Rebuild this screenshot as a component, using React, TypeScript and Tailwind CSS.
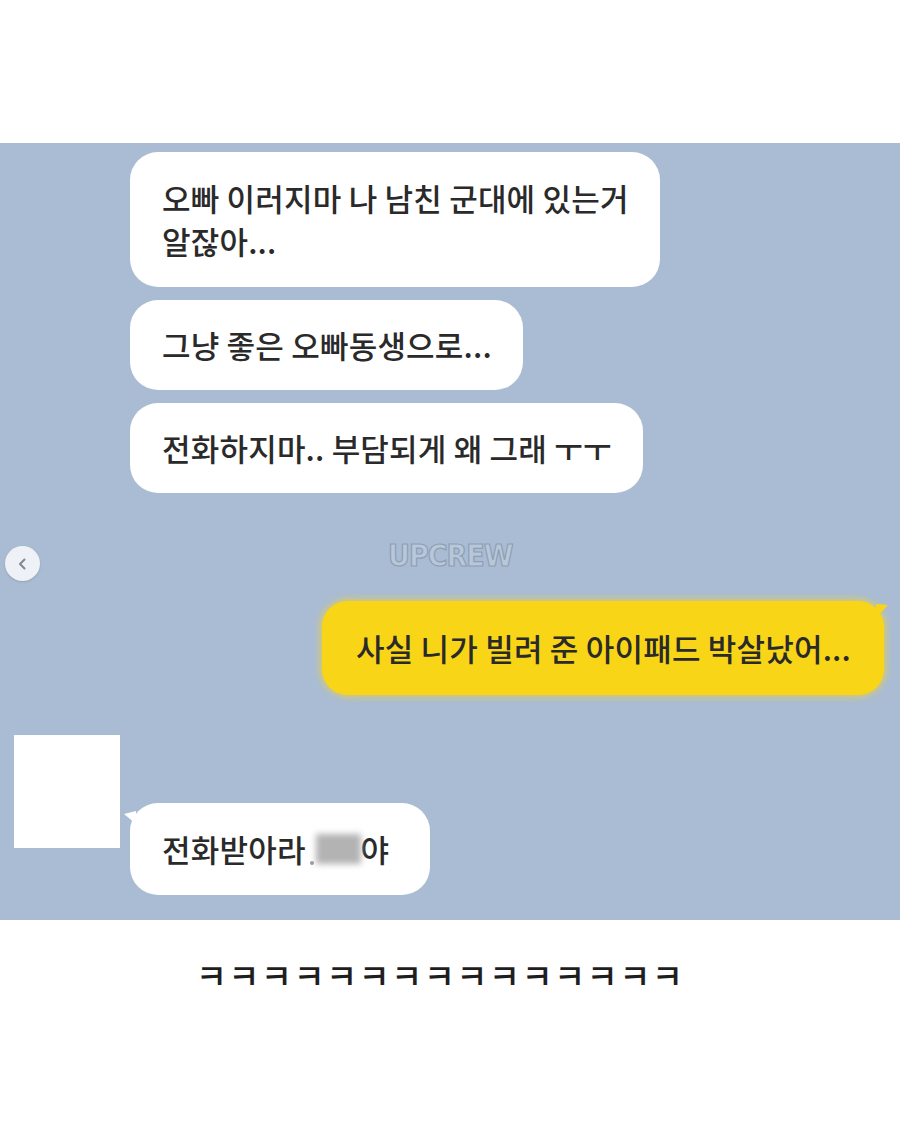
const kr = "font-['Noto_Sans_CJK_KR','Noto_Sans',sans-serif]";

function LeftTail() {
  return (
    <svg className="absolute -left-[6px] top-[8px]" width="12" height="16" viewBox="0 0 12 16">
      <path d="M12 0 L0 3 L12 13 Z" fill="#ffffff" />
    </svg>
  );
}

function RightTail() {
  return (
    <svg className="absolute -right-[4px] top-[3px]" width="12" height="16" viewBox="0 0 12 16">
      <path d="M0 0 L12 1 L0 14 Z" fill="#f9d518" />
    </svg>
  );
}

export default function App() {
  return (
    <div className={`w-[900px] h-[1125px] bg-white ${kr} text-[#2a2a2a]`}>
      <div className="h-[143px]" />

      <div className="relative h-[777px] bg-[#aabcd3]">
        {/* carousel arrow */}
        <div className="absolute left-[5px] top-[403px] w-[35px] h-[35px] rounded-full bg-[#eef1f6] flex items-center justify-center shadow-sm">
          <svg width="14" height="14" viewBox="0 0 14 14">
            <path d="M8.5 2.5 L4 7 L8.5 11.5" stroke="#7f8894" strokeWidth="2" fill="none" strokeLinecap="round" strokeLinejoin="round" />
          </svg>
        </div>

        {/* watermark */}
        <div className="absolute left-[388px] top-[398px] text-[30px] leading-none font-bold tracking-[-1px] text-[#b8c7da] [-webkit-text-stroke:1.2px_#8e9fb4] font-['Liberation_Sans_Narrow','DejaVu_Sans_Condensed',sans-serif]">
          UPCREW
        </div>

        <div className="flex flex-col items-start pl-[130px] pt-[9px] font-medium">
          <div className="rounded-[28px] bg-white pl-[32px] pr-[31px] pt-[24px] pb-[25px] text-[31px] leading-[43px] tracking-[0.2px]">
            오빠 이러지마 나 남친 군대에 있는거
            <br />
            알잖아...
          </div>
          <div className="mt-[13px] rounded-[28px] bg-white pl-[32px] pr-[31px] h-[90px] flex items-center text-[31px] tracking-[0.2px]">
            그냥 좋은 오빠동생으로...
          </div>
          <div className="mt-[13px] rounded-[28px] bg-white pl-[32px] pr-[31px] h-[90px] flex items-center text-[31px] tracking-[0.2px]">
            전화하지마.. 부담되게 왜 그래 ㅜㅜ
          </div>
        </div>

        <div className="flex justify-end pr-[16px] mt-[108px] font-medium">
          <div className="relative rounded-[26px] bg-[#f9d518] shadow-[0_0_6px_2px_rgba(250,214,30,0.6)] pl-[34px] pr-[30px] h-[94px] w-[562px] flex items-center text-[31px] tracking-[0.2px]">
            사실 니가 빌려 준 아이패드 박살났어...
            <RightTail />
          </div>
        </div>

        <div className="flex items-start pl-[14px] mt-[40px] font-medium">
          <div className="w-[106px] h-[113px] bg-white" />
          <div className="relative ml-[10px] mt-[68px] rounded-[28px] bg-white pl-[32px] pr-[30px] h-[92px] w-[300px] flex items-center text-[31px] tracking-[0.2px]">
            전화받아라
            <span className="ml-[4px] w-[4px] h-[4px] rounded-full bg-[#9a9a9a] self-end mb-[30px]" />
            <span className="ml-[2px] w-[45px] h-[30px] bg-[#b3b3b3] blur-[3px]" />
            야
            <LeftTail />
          </div>
        </div>
      </div>

      <div className="flex justify-center pr-[20px] pt-[38px] text-[34px] tracking-[1.3px] font-medium text-[#1e1e1e] leading-none">
        ㅋㅋㅋㅋㅋㅋㅋㅋㅋㅋㅋㅋㅋㅋㅋ
      </div>
    </div>
  );
}
